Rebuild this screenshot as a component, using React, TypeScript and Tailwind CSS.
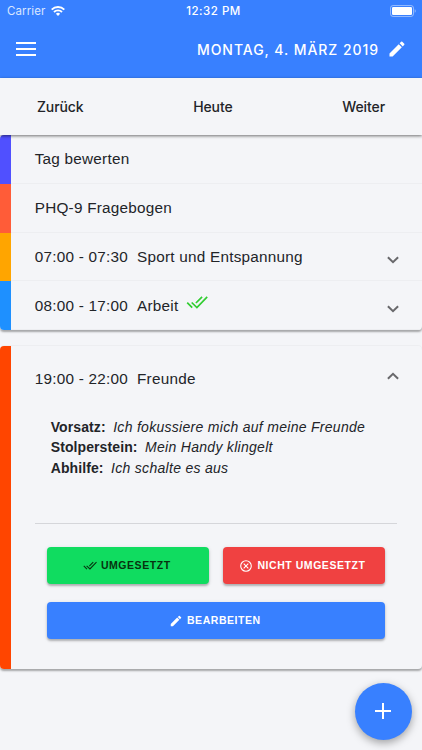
import type { ReactNode } from "react";
import clsx from "clsx";

interface IconProps {
  className?: string;
}

function PencilIcon({ className }: IconProps) {
  return (
    <svg viewBox="0 0 24 24" fill="currentColor" className={className}>
      <path d="M3 17.25V21h3.75L17.81 9.94l-3.75-3.75L3 17.25zM20.71 7.04a1 1 0 0 0 0-1.41l-2.34-2.34a1 1 0 0 0-1.41 0l-1.83 1.83 3.75 3.75 1.83-1.83z" />
    </svg>
  );
}

function DoneAllIcon({ className }: IconProps) {
  return (
    <svg viewBox="0 0 22 14" fill="none" stroke="currentColor" strokeWidth="1.7" className={className}>
      <path d="M1.2 7.6l5 5M5.7 7.5l5.2 5L21.2 1.8M9.9 8l6.2-6.2" />
    </svg>
  );
}

function CancelIcon({ className }: IconProps) {
  return (
    <svg viewBox="0 0 12 12" fill="none" stroke="currentColor" strokeWidth="1.1" className={className}>
      <circle cx="6" cy="6" r="5.3" />
      <path d="M3.7 3.7l4.6 4.6M8.3 3.7L3.7 8.3" />
    </svg>
  );
}

function ChevronIcon({ up }: { up?: boolean }) {
  return (
    <svg
      viewBox="0 0 12 8"
      fill="none"
      stroke="currentColor"
      strokeWidth="2"
      className={clsx("h-2 w-3 text-[#69696c]", up && "rotate-180")}
    >
      <path d="M.9 1.2L6 6.2l5.1-5" />
    </svg>
  );
}

function StatusBar() {
  return (
    <div className="grid h-[22px] grid-cols-3 items-center pr-[6px] pl-[7px] text-[11.5px]">
      <span className="flex items-center gap-[6px] text-[#d9e6ff]">
        <span className="pt-px tracking-[0.1px]">Carrier</span>
        <svg viewBox="0 0 14 10" fill="none" stroke="white" strokeWidth="1.9" className="h-[10px] w-[14px]">
          <path d="M.7 3.6a8.9 8.9 0 0 1 12.6 0M3 6a5.7 5.7 0 0 1 8 0" />
          <path d="M7 9.9L4.9 7.8a3 3 0 0 1 4.2 0z" fill="white" stroke="none" />
        </svg>
      </span>
      <span className="pt-px pl-[4px] text-center font-medium tracking-[0.5px]">12:32 PM</span>
      <svg viewBox="0 0 26 12" className="mb-px h-3 w-[26px] justify-self-end">
        <rect x=".5" y=".5" width="23" height="11" rx="2.6" fill="none" stroke="white" strokeOpacity=".45" />
        <rect x="2" y="2" width="20" height="8" rx="1.2" fill="white" />
        <path d="M24.7 4.2v3.6c1.4-.5 1.4-3.1 0-3.6z" fill="white" fillOpacity=".45" />
      </svg>
    </div>
  );
}

function Header() {
  return (
    <header className="h-[78px] bg-[#3880ff] font-[Inter,sans-serif] text-white">
      <StatusBar />
      <div className="flex h-[54px] items-center justify-between pr-[15px] pl-4">
        <div className="flex w-5 flex-col gap-1">
          <span className="h-[2px] bg-white" />
          <span className="h-[2px] bg-white" />
          <span className="h-[2px] bg-white" />
        </div>
        <div className="flex items-center gap-2">
          <h1 className="text-[14px] font-medium tracking-[0.95px] whitespace-nowrap">MONTAG, 4. MÄRZ 2019</h1>
          <PencilIcon className="size-5" />
        </div>
      </div>
    </header>
  );
}

function DayNav() {
  return (
    <nav className="relative z-10 flex h-[57px] items-center justify-between bg-[#f4f5f8] pr-[37px] pl-[37px] font-[Inter,sans-serif] text-[14px] font-medium tracking-[-0.1px] shadow-[0_1px_3px_rgba(0,0,0,0.55)]">
      <button>Zurück</button>
      <button>Heute</button>
      <button>Weiter</button>
    </nav>
  );
}

interface RowProps {
  color: string;
  children: ReactNode;
  expandable?: boolean;
}

function Row({ color, children, expandable }: RowProps) {
  return (
    <div className="flex h-[48.75px]">
      <div className={clsx("w-[10.7px]", color)} />
      <div className="flex flex-1 items-center justify-between border-b border-[#edeef1] pr-[23px] pl-[24px]">
        <span className="flex items-center gap-[9px] pt-[2px] whitespace-pre">{children}</span>
        {expandable && (
          <span className="pt-[7px]">
            <ChevronIcon />
          </span>
        )}
      </div>
    </div>
  );
}

function Note({ label, text }: { label: string; text: string }) {
  return (
    <p className="whitespace-nowrap">
      <strong className="mr-[7.5px] tracking-[0.1px]">{label}:</strong>
      <em className="tracking-[0.29px]">{text}</em>
    </p>
  );
}

function ActionButton({ className, children }: { className: string; children: ReactNode }) {
  return (
    <button
      className={clsx(
        "flex h-[37px] items-center justify-center rounded-[4px] pr-[2px] text-[10.5px] font-bold tracking-[0.55px] shadow-[0_2px_2px_rgba(0,0,0,0.22),0_1px_4px_rgba(0,0,0,0.12)]",
        className
      )}
    >
      {children}
    </button>
  );
}

export default function App() {
  return (
    <div className="relative h-[750px] w-[422px] overflow-hidden bg-[#f4f5f8] font-['Liberation_Sans',sans-serif] text-[15.3px] tracking-[0.24px] text-[#222428]">
      <Header />
      <DayNav />

      <section className="overflow-hidden rounded-[4px] shadow-[0_2px_2px_rgba(0,0,0,0.32)]">
        <Row color="bg-[#5050ff]">Tag bewerten</Row>
        <Row color="bg-[#ff5c38]">PHQ-9 Fragebogen</Row>
        <Row color="bg-[#ffa500]" expandable>
          <span>07:00 - 07:30</span>
          <span>Sport und Entspannung</span>
        </Row>
        <Row color="bg-[#1e90ff]" expandable>
          <span>08:00 - 17:00</span>
          <span>Arbeit</span>
          <DoneAllIcon className="mb-[8px] -ml-px h-[14px] w-[22px] text-[#32cd32]" />
        </Row>
      </section>

      <section className="mt-4 flex h-[323px] overflow-hidden rounded-[4px] shadow-[0_2px_2px_rgba(0,0,0,0.32),0_-1px_1px_rgba(0,0,0,0.03)]">
        <div className="w-[10.7px] bg-[#ff4500]" />
        <div className="flex-1 pr-[25px] pl-[24px]">
          <div className="flex h-[66px] items-center justify-between">
            <span className="flex gap-[9px]">
              <span>19:00 - 22:00</span>
              <span>Freunde</span>
            </span>
            <span className="-mr-[2px] pb-[6px]">
              <ChevronIcon up />
            </span>
          </div>
          <div className="h-[112px] border-b border-[#d5d6da] pt-[5px] pl-4 text-[14px] leading-[20.4px]">
            <Note label="Vorsatz" text="Ich fokussiere mich auf meine Freunde" />
            <Note label="Stolperstein" text="Mein Handy klingelt" />
            <Note label="Abhilfe" text="Ich schalte es aus" />
          </div>
          <div className="grid grid-cols-2 gap-x-[14px] gap-y-[18px] px-3 pt-[23px]">
            <ActionButton className="gap-1 bg-[#10dc60] text-[#07330f]">
              <DoneAllIcon className="h-[9px] w-[14px]" />
              UMGESETZT
            </ActionButton>
            <ActionButton className="gap-[5px] bg-[#f04141] text-white">
              <CancelIcon className="size-3" />
              NICHT UMGESETZT
            </ActionButton>
            <ActionButton className="col-span-2 gap-1 bg-[#3880ff] text-white">
              <PencilIcon className="size-[14px]" />
              BEARBEITEN
            </ActionButton>
          </div>
        </div>
      </section>

      <button className="absolute right-[10.5px] bottom-[10.5px] flex size-[57px] items-center justify-center rounded-full bg-[#3880ff] text-white shadow-[0_3px_8px_rgba(0,0,0,0.35)]">
        <svg viewBox="0 0 16 16" stroke="currentColor" strokeWidth="2" className="size-4">
          <path d="M8 0v16M0 8h16" />
        </svg>
      </button>
    </div>
  );
}
